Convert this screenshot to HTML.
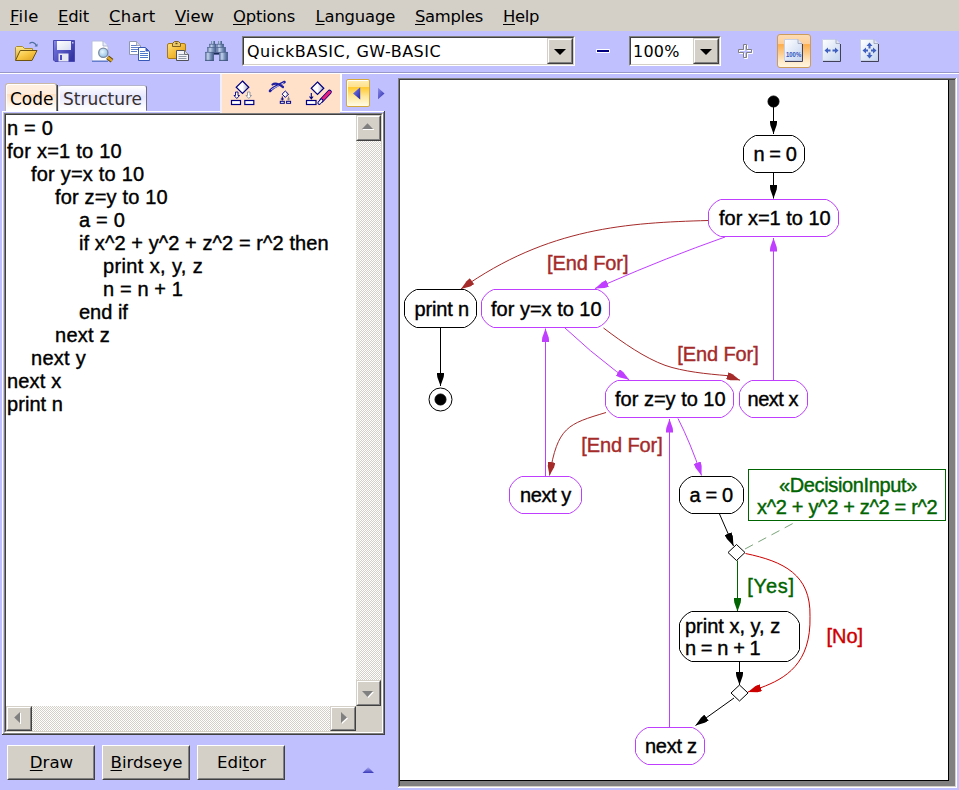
<!DOCTYPE html>
<html>
<head>
<meta charset="utf-8">
<title>Code to FlowChart</title>
<style>
html,body{margin:0;padding:0;}
body{width:959px;height:790px;overflow:hidden;position:relative;background:#c0c0ff;font-family:"DejaVu Sans","Liberation Sans",sans-serif;font-size:16px;color:#000;}
.abs{position:absolute;}
#menubar{position:absolute;left:0;top:0;width:959px;height:31px;background:#d4d0c8;}
#menubar span{position:absolute;top:7px;line-height:19px;font-size:16.4px;white-space:pre;}
u{text-decoration:underline;text-underline-offset:2px;text-decoration-thickness:1px;}
.sunken{position:absolute;box-sizing:border-box;border:1px solid;border-color:#808080 #fff #fff #808080;background:#fff;}
.sunken>.in{position:absolute;left:0;top:0;right:0;bottom:0;box-sizing:border-box;border:1px solid;border-color:#404040 #d4d0c8 #d4d0c8 #404040;}
.btn{position:absolute;box-sizing:border-box;background:#d4d0c8;border:1px solid;border-color:#fff #404040 #404040 #fff;}
.btn>.in{position:absolute;left:0;top:0;right:0;bottom:0;box-sizing:border-box;border:1px solid;border-color:#d4d0c8 #808080 #808080 #d4d0c8;}
.btn.sb{border-color:#d4d0c8 #404040 #404040 #d4d0c8;}
.btn.sb>.in{border-color:#fff #808080 #808080 #fff;}
.check{background:conic-gradient(#fff 25%,#d4d0c8 0 50%,#fff 0 75%,#d4d0c8 0) 0 0/2px 2px;}
.code{-webkit-text-stroke:0.4px #000;position:absolute;font-family:"Liberation Sans",sans-serif;font-size:20px;line-height:23px;white-space:pre;color:#000;}
.pushtxt{position:absolute;left:1px;right:0;top:7px;text-align:center;font-size:16.6px;line-height:19px;}
svg text{font-family:"Liberation Sans",sans-serif;font-size:20px;stroke-width:0.4px;}
</style>
</head>
<body>

<!-- ===== menu bar ===== -->
<div id="menubar">
<span style="left:10px;letter-spacing:0.3px"><u>F</u>ile</span>
<span style="left:58px;letter-spacing:-0.2px"><u>E</u>dit</span>
<span style="left:109px;letter-spacing:0.28px"><u>C</u>hart</span>
<span style="left:175px"><u>V</u>iew</span>
<span style="left:233px;letter-spacing:-0.18px"><u>O</u>ptions</span>
<span style="left:315.5px;letter-spacing:-0.15px"><u>L</u>anguage</span>
<span style="left:415px;letter-spacing:-0.3px"><u>S</u>amples</span>
<span style="left:503px;letter-spacing:-0.3px"><u>H</u>elp</span>
</div>

<!-- ===== toolbar ===== -->
<div class="abs" style="left:0;top:72px;width:959px;height:1px;background:#9898c8"></div>
<div class="abs" style="left:0;top:73px;width:959px;height:1px;background:#fff"></div>

<!-- language combobox -->
<div class="sunken" style="left:242px;top:36px;width:333px;height:30px"><div class="in"></div>
<div class="abs" style="left:4px;top:5px;font-size:16px;line-height:19px;white-space:pre;letter-spacing:0.5px">QuickBASIC, GW-BASIC</div>
<div class="btn sb" style="left:304px;top:1px;width:26px;height:26px"><div class="in"></div>
<svg class="abs" style="left:6px;top:10px" width="12" height="6"><path d="M0 0H12L6 6Z" fill="#000"/></svg></div>
</div>

<!-- zoom combobox -->
<div class="sunken" style="left:629px;top:36px;width:92px;height:30px"><div class="in"></div>
<div class="abs" style="left:3px;top:5px;font-size:16px;line-height:19px;white-space:pre;letter-spacing:0.2px">100%</div>
<div class="btn sb" style="left:63px;top:1px;width:26px;height:26px"><div class="in"></div>
<svg class="abs" style="left:6px;top:10px" width="12" height="6"><path d="M0 0H12L6 6Z" fill="#000"/></svg></div>
</div>

<!-- minus / plus -->
<div class="abs" style="left:596px;top:49px;width:14px;height:4px;background:#fff;border-radius:1px"></div><div class="abs" style="left:597px;top:50px;width:12px;height:2px;background:#000080"></div>
<svg class="abs" style="left:730px;top:38px" width="32" height="26" viewBox="730 38 32 26"><path id="plus" d="M743.5 44.5H746.5V49.5H751.5V52.5H746.5V57.5H743.5V52.5H738.5V49.5H743.5Z" fill="none" stroke="#fff" stroke-width="1" transform="translate(1,1)"/><path d="M743.5 44.5H746.5V49.5H751.5V52.5H746.5V57.5H743.5V52.5H738.5V49.5H743.5Z" fill="none" stroke="#808080" stroke-width="1"/></svg>

<!-- toolbar icons -->
<svg class="abs" style="left:0;top:31px" width="240" height="41" viewBox="0 31 240 41">
<defs>
<linearGradient id="gFold" x1="0" y1="0" x2="0" y2="1"><stop offset="0" stop-color="#ffe98c"/><stop offset="1" stop-color="#d9a22c"/></linearGradient>
<linearGradient id="gFold2" x1="0" y1="0" x2="1" y2="1"><stop offset="0" stop-color="#ffe88a"/><stop offset="0.5" stop-color="#f6c440"/><stop offset="1" stop-color="#d89c20"/></linearGradient>
<linearGradient id="gFlop" x1="0" y1="0" x2="1" y2="0.6"><stop offset="0" stop-color="#9090e8"/><stop offset="0.25" stop-color="#6a6ad4"/><stop offset="1" stop-color="#3434a4"/></linearGradient>
<linearGradient id="gWh" x1="0" y1="0" x2="1" y2="1"><stop offset="0" stop-color="#ffffff"/><stop offset="1" stop-color="#d8dcf0"/></linearGradient>
<linearGradient id="gClip" x1="0" y1="0" x2="1" y2="1"><stop offset="0" stop-color="#ffe27a"/><stop offset="0.5" stop-color="#f4bc38"/><stop offset="1" stop-color="#d4981c"/></linearGradient>
<linearGradient id="gBin" x1="0" y1="0" x2="1" y2="0"><stop offset="0" stop-color="#4c6490"/><stop offset="0.3" stop-color="#c4d4ee"/><stop offset="0.6" stop-color="#7e96be"/><stop offset="1" stop-color="#3c5480"/></linearGradient>
<radialGradient id="gLens" cx="0.4" cy="0.4" r="0.7"><stop offset="0" stop-color="#e8f6ff"/><stop offset="1" stop-color="#88bce0"/></radialGradient>
</defs>
<!-- open folder -->
<path d="M15.5 60V47.5L16.5 46.5H22.5L24.5 48.5H32.5V50.5" fill="url(#gFold)" stroke="#a88830" stroke-width="1"/>
<path d="M15.5 60.5L20.2 50.5H37L32 60.5Z" fill="url(#gFold2)" stroke="#6e5210" stroke-width="1"/>
<path d="M29.5 43.5C32 41.5 35 42.5 36.5 46" fill="none" stroke="#5070a0" stroke-width="1.2"/>
<path d="M34.5 46.5H37.5V43.5Z" fill="#5070a0"/>
<!-- floppy -->
<path d="M53.5 40.5H74.5V61.5H55L53.5 60Z" fill="url(#gFlop)" stroke="#4848b4" stroke-width="1"/>
<rect x="57" y="41" width="14" height="9" fill="url(#gWh)"/>
<rect x="58.5" y="53.5" width="10" height="8" fill="#e4e6f4"/>
<rect x="60" y="55" width="2" height="5" fill="#4848c0"/>
<rect x="72" y="42" width="1.5" height="1.5" fill="#c0c0f0"/>
<!-- print preview -->
<path d="M92 41H103L108 46V61H92Z" fill="#fff" stroke="#b8c0e0" stroke-width="1"/>
<path d="M103 41V46H108" fill="#e8ecfa" stroke="#a0a8c8" stroke-width="0.8"/>
<path d="M92 61.2H108" stroke="#4060c0" stroke-width="1"/>
<path d="M107.5 57.2L112 60.8" stroke="#5a4410" stroke-width="4.4" stroke-linecap="butt"/>
<path d="M107.5 57.2L112 60.8" stroke="#d8a428" stroke-width="2.6" stroke-linecap="butt"/>
<circle cx="103.3" cy="52.8" r="4.6" fill="url(#gLens)" stroke="#7888a0" stroke-width="1.3"/>
<!-- copy -->
<path d="M129.5 41.5H136.5L140.5 45.5V54.5H129.5Z" fill="#fff" stroke="#9098b0" stroke-width="1"/>
<path d="M131 45.5H137M131 47.5H139M131 49.5H139M131 51.5H137" stroke="#6080c8" stroke-width="1"/>
<path d="M136.5 41.5V45.5H140.5" fill="#d0d4e0" stroke="#9098b0" stroke-width="0.8"/>
<path d="M138.5 47.5H145.5L149.5 51.5V60.5H138.5Z" fill="#fff" stroke="#3858b8" stroke-width="1"/>
<path d="M140 51.5H145M140 53.5H148M140 55.5H148M140 57.5H148" stroke="#5078c8" stroke-width="1"/>
<path d="M145.5 47.5V51.5H149.5Z" fill="#3858b8"/>
<!-- paste -->
<rect x="167.5" y="43.5" width="18" height="15" rx="1.5" fill="url(#gClip)" stroke="#a87818" stroke-width="1"/>
<path d="M172.5 46.5V43.5L174.5 41.5H178.5L180.5 43.5V46.5Z" fill="#e8c868" stroke="#806020" stroke-width="1"/>
<rect x="175.5" y="42.8" width="2" height="1.4" fill="#604810"/>
<path d="M176.5 50.5H184.5L188.5 54.5V60.5H176.5Z" fill="#f4f4f8" stroke="#505058" stroke-width="1"/>
<path d="M178.5 54.5H184M178.5 56.5H186.5M178.5 58.5H186.5" stroke="#9098a8" stroke-width="1"/>
<path d="M184.5 50.5V54.5H188.5" fill="#d8d8e0" stroke="#505058" stroke-width="0.8"/>
<!-- binoculars -->
<g>
<rect x="211" y="41" width="4" height="3.2" fill="url(#gBin)"/>
<rect x="218" y="41" width="4" height="3.2" fill="url(#gBin)"/>
<rect x="209.2" y="44" width="7" height="3.4" fill="url(#gBin)"/>
<rect x="216.6" y="44" width="7.2" height="3.4" fill="url(#gBin)"/>
<rect x="207.2" y="47.2" width="9.2" height="5" fill="url(#gBin)"/>
<rect x="216.6" y="47.2" width="9.2" height="5" fill="url(#gBin)"/>
<rect x="213.5" y="52.4" width="6" height="2.2" fill="#1c2c58"/>
<rect x="205.2" y="52" width="8.7" height="8.8" fill="url(#gBin)"/>
<rect x="219.2" y="52" width="8.7" height="8.8" fill="url(#gBin)"/>
<path d="M205.2 52.4H213.9M219.2 52.4H227.9M207.2 47.5H216.4M216.6 47.5H225.8M209.2 44.3H216.2M216.6 44.3H223.8" stroke="#4a6088" stroke-width="0.7" fill="none"/>
<path d="M205.2 60.4H213.9M219.2 60.4H227.9" stroke="#3a5078" stroke-width="0.9" fill="none"/>
</g>
</svg>

<!-- right toolbar buttons -->
<div class="abs" style="left:777px;top:34px;width:34px;height:34px;box-sizing:border-box;border:1px solid #cc9c5c;border-radius:3px;background:linear-gradient(#fddcb4 0%,#fdcf9a 27%,#fdae4c 30%,#fdc47c 50%,#ffe8c4 80%,#fff6e0 100%)"></div>
<svg class="abs" style="left:770px;top:31px" width="120" height="41" viewBox="770 31 120 41">
<defs>
<linearGradient id="gPg" x1="0" y1="0" x2="1" y2="1"><stop offset="0" stop-color="#ffffff"/><stop offset="1" stop-color="#c4d4f0"/></linearGradient>
</defs>
<g stroke-width="1">
<path d="M784.5 39.5H798L802 43.5V60.5H784.5Z" fill="url(#gPg)" stroke="#c8d0e8"/>
<path d="M802.5 44V61.5H785" fill="none" stroke="#404058"/>
<path d="M798 39.5V43.5H802" fill="#e0e4f0" stroke="#9098b0" stroke-width="0.7"/>
<path d="M822.5 39.5H836L840 43.5V60.5H822.5Z" fill="url(#gPg)" stroke="#c8d0e8"/>
<path d="M840.5 44V61.5H823" fill="none" stroke="#404058"/>
<path d="M836 39.5V43.5H840" fill="#e0e4f0" stroke="#9098b0" stroke-width="0.7"/>
<path d="M860.5 39.5H874L878 43.5V60.5H860.5Z" fill="url(#gPg)" stroke="#c8d0e8"/>
<path d="M878.5 44V61.5H861" fill="none" stroke="#404058"/>
<path d="M874 39.5V43.5H878" fill="#e0e4f0" stroke="#9098b0" stroke-width="0.7"/>
</g>
<text x="786" y="56.8" style="font-family:'Liberation Sans',sans-serif;font-size:6.8px;font-weight:bold;stroke:none" fill="#3454bc" textLength="15.2" lengthAdjust="spacingAndGlyphs">100%</text>
<g fill="#4060c0">
<path d="M824.5 50.5L828 47.5V49.5H830.5V51.5H828V53.5Z"/>
<path d="M838.5 50.5L835 47.5V49.5H832.5V51.5H835V53.5Z"/>
<path d="M862.5 50.5L866 47.5V49.5H868V51.5H866V53.5Z"/>
<path d="M876.5 50.5L873 47.5V49.5H871V51.5H873V53.5Z"/>
<path d="M869.5 42.5L872.5 46H870.5V48.5H868.5V46H866.5Z"/>
<path d="M869.5 58.5L872.5 55H870.5V52.5H868.5V55H866.5Z"/>
</g>
</svg>


<!-- ===== left panel ===== -->
<div id="leftpanel">
<!-- peach icon strip -->

<!-- gold arrow button -->
<div class="abs" style="left:346px;top:79px;width:24px;height:28px;box-sizing:border-box;border:1px solid #d4a83c;border-radius:2px;background:linear-gradient(#ffeeb4 0%,#ffe08c 27%,#ffc930 29%,#ffe698 62%,#fffbe8 100%);box-shadow:inset 1px 1px 0 #fff"></div>
<svg class="abs" style="left:352px;top:87px" width="10" height="13"><defs><linearGradient id="gArr" x1="0" y1="0" x2="1" y2="1"><stop offset="0" stop-color="#8888e8"/><stop offset="1" stop-color="#2020a8"/></linearGradient></defs><path d="M8.2 0.2V12.6L1 6.4Z" fill="url(#gArr)"/></svg>
<svg class="abs" style="left:377px;top:87px" width="9" height="13"><defs><linearGradient id="gArr2" x1="0" y1="0" x2="1" y2="1"><stop offset="0" stop-color="#9090e8"/><stop offset="1" stop-color="#2828b0"/></linearGradient></defs><path d="M1 0.8V12.2L7.5 6.5Z" fill="url(#gArr2)"/></svg>

<!-- tabs -->
<div class="abs" style="left:58px;top:85px;width:89px;height:26px;box-sizing:border-box;border:1px solid;border-color:#b4b4cc #6c6c7c transparent #e8e8f8;border-radius:3px 3px 0 0;background:linear-gradient(#fff,#e6e6ff 45%,#fff 95%);box-shadow:inset 1px 1px 0 #fff"></div>
<div class="abs" style="left:63px;top:89px;font-size:17px;line-height:20px;white-space:pre;color:#383030">Structure</div>
<div class="abs" style="left:5px;top:83px;width:52px;height:29px;box-sizing:border-box;border:1px solid;border-color:#cbb8a4 #808080 transparent #cbb8a4;border-radius:3px 3px 0 0;background:linear-gradient(#fff0e2,#ffeedd 36%,#ffdfc0 37%,#fff 95%);box-shadow:inset 1px 1px 0 #fff"></div>
<div class="abs" style="left:57px;top:85px;width:1px;height:26px;background:#404040"></div>
<div class="abs" style="left:10px;top:89px;font-size:17px;line-height:20px;white-space:pre">Code</div>

<!-- tab page frame -->
<div class="abs" style="left:2px;top:111px;width:383px;height:1px;background:#fff"></div>
<div class="abs" style="left:2px;top:111px;width:1px;height:624px;background:#fff"></div>
<div class="abs" style="left:384px;top:111px;width:1px;height:624px;background:#404040"></div>
<div class="abs" style="left:383px;top:112px;width:1px;height:622px;background:#808080"></div>
<div class="abs" style="left:2px;top:734px;width:383px;height:1px;background:#404040"></div>
<div class="abs" style="left:3px;top:733px;width:381px;height:1px;background:#808080"></div>

<div class="abs" style="left:222px;top:74px;width:118px;height:39px;background:#ffe0c8"></div>
<div class="abs" style="left:340px;top:74px;width:2px;height:38px;background:#fff"></div>
<div class="abs" style="left:220px;top:74px;width:2px;height:39px;background:#eeeeff"></div>
<!-- peach strip icons -->
<svg class="abs" style="left:222px;top:74px" width="118" height="38" viewBox="222 74 118 38">
<defs>
<linearGradient id="gDia" x1="0" y1="0" x2="1" y2="0"><stop offset="0" stop-color="#ffffff"/><stop offset="0.5" stop-color="#ffffff"/><stop offset="1" stop-color="#a8a8b8"/></linearGradient>
</defs>
<g stroke="#000080" stroke-width="1.2" fill="#fff">
<path d="M242.5 81L248.8 87.3L242.5 93.5L236.2 87.3Z" fill="url(#gDia)"/>
<rect x="231.5" y="100.5" width="9" height="4"/>
<rect x="244.8" y="100.5" width="9" height="4"/>
<path d="M235.5 92V95.5H234L236.8 98.5L239.5 95.5H238V92Z" stroke-width="0.9"/>
<path d="M247.5 92V95.5H246L248.8 98.5L251.5 95.5H250V92Z" stroke="#909098" stroke-width="0.9"/>
<!-- icon 2 -->
<path d="M285.3 91L288.5 94.2L285.3 97.4L282.1 94.2Z" fill="url(#gDia)" stroke-width="1"/>
<rect x="280.3" y="101.3" width="4" height="2" stroke-width="1"/>
<rect x="286.6" y="101.3" width="4" height="2" stroke-width="1"/>
<path d="M282.3 96.5V100.5M280.8 99H283.8" stroke-width="1" fill="none"/>
<path d="M288.6 96.5V100.5M287.1 99H290.1" stroke="#808090" stroke-width="1" fill="none"/>
<!-- icon 3 -->
<path d="M317.5 82L323.8 88.3L317.5 94.5L311.2 88.3Z" fill="url(#gDia)"/>
<rect x="306.5" y="100.5" width="9.5" height="4"/>
<path d="M311.3 93V98M309.5 96.5L311.3 98.8L313.1 96.5" fill="none" stroke-width="1.1"/>
</g>
<!-- brush of icon 2 -->
<path d="M270 91C272 87.5 277 85.5 284.5 82" stroke="#2020a0" stroke-width="2.6" stroke-linecap="round" fill="none"/>
<path d="M271.5 89.5C274 87.5 278 86 283.5 83" stroke="#c8c8f0" stroke-width="1" stroke-linecap="round" fill="none"/>
<path d="M272.5 84.5C275 82.5 279 84 283 87" stroke="#2020a0" stroke-width="2.2" stroke-linecap="round" fill="none"/>
<!-- marker of icon 3 -->
<path d="M329.5 92L321.5 100.5" stroke="#000080" stroke-width="4.6" stroke-linecap="round"/>
<path d="M329.5 92L322.5 99.5" stroke="#e8207c" stroke-width="3" stroke-linecap="round"/>
<path d="M321.6 100.4L319.2 103" stroke="#000080" stroke-width="3.6" stroke-linecap="round"/>
<path d="M321.4 100.6L319.4 102.8" stroke="#ffffff" stroke-width="2" stroke-linecap="round"/>
</svg>
<!-- text control -->
<div class="sunken" style="left:4px;top:113px;width:379px;height:620px"><div class="in"></div></div>
<div class="code" style="left:7px;top:117px;letter-spacing:0.188px">n = 0</div>
<div class="code" style="left:7px;top:140px;letter-spacing:0.250px">for x=1 to 10</div>
<div class="code" style="left:31px;top:163px;letter-spacing:0.208px">for y=x to 10</div>
<div class="code" style="left:55px;top:186px;letter-spacing:0.167px">for z=y to 10</div>
<div class="code" style="left:79px;top:209px;letter-spacing:0.188px">a = 0</div>
<div class="code" style="left:79px;top:232px;letter-spacing:0.089px">if x^2 + y^2 + z^2 = r^2 then</div>
<div class="code" style="left:103px;top:255px;letter-spacing:0.375px">print x, y, z</div>
<div class="code" style="left:103px;top:278px;letter-spacing:0.125px">n = n + 1</div>
<div class="code" style="left:79px;top:301px">end if</div>
<div class="code" style="left:55px;top:324px;letter-spacing:0.260px">next z</div>
<div class="code" style="left:31px;top:347px;letter-spacing:0.260px">next y</div>
<div class="code" style="left:7px;top:370px;letter-spacing:0.160px">next x</div>
<div class="code" style="left:7px;top:393px;letter-spacing:0.050px">print n</div>

<!-- vertical scrollbar -->
<div class="abs check" style="left:356px;top:115px;width:25px;height:591px"></div>
<div class="btn sb" style="left:356px;top:115px;width:25px;height:26px"><div class="in"></div>
<svg class="abs" style="left:5px;top:7px" width="14" height="9"><path d="M1 6.5H12" stroke="#fff"/><path d="M0 6H11L5.5 0.2Z" fill="#808080"/></svg></div>
<div class="btn sb" style="left:356px;top:680px;width:25px;height:26px"><div class="in"></div>
<svg class="abs" style="left:5px;top:10px" width="14" height="9"><path d="M1 1H12L6.5 7Z" fill="#fff"/><path d="M0 0H11L5.5 6Z" fill="#808080"/></svg></div>
<!-- horizontal scrollbar -->
<div class="abs check" style="left:6px;top:706px;width:350px;height:25px"></div>
<div class="btn sb" style="left:6px;top:706px;width:26px;height:25px"><div class="in"></div>
<svg class="abs" style="left:7px;top:5px" width="9" height="14"><path d="M6.5 1V12" stroke="#fff"/><path d="M6 0V11L0.2 5.5Z" fill="#808080"/></svg></div>
<div class="btn sb" style="left:330px;top:706px;width:26px;height:25px"><div class="in"></div>
<svg class="abs" style="left:10px;top:5px" width="9" height="14"><path d="M1 1V12L7 6.5Z" fill="#fff"/><path d="M0 0V11L6 5.5Z" fill="#808080"/></svg></div>
<div class="abs" style="left:356px;top:706px;width:25px;height:25px;background:#d4d0c8"></div>

<!-- bottom buttons -->
<div class="btn" style="left:7px;top:745px;width:88px;height:35px"><div class="in"></div><div class="pushtxt"><u>D</u>raw</div></div>
<div class="btn" style="left:102px;top:745px;width:88px;height:35px"><div class="in"></div><div class="pushtxt"><u>B</u>irdseye</div></div>
<div class="btn" style="left:197px;top:745px;width:88px;height:35px"><div class="in"></div><div class="pushtxt">Edi<u>t</u>or</div></div>
<svg class="abs" style="left:362px;top:766px" width="13" height="8"><defs><linearGradient id="gTri" x1="0" y1="0" x2="0" y2="1"><stop offset="0" stop-color="#b0b0f8"/><stop offset="1" stop-color="#3838b8"/></linearGradient></defs><path d="M0.5 7H12L6.2 1Z" fill="url(#gTri)"/></svg>
</div>

<!-- ===== diagram panel ===== -->
<div id="diagram">
<!-- frame -->
<div class="abs" style="left:398px;top:78px;width:559px;height:710px;background:#808080"></div>
<div class="abs" style="left:399px;top:79px;width:557px;height:708px;background:#404040"></div>
<div class="abs" style="left:400px;top:80px;width:557px;height:708px;background:#fff"></div>
<div class="abs" style="left:400px;top:80px;width:556px;height:707px;background:#d4d0c8"></div>
<div class="abs" style="left:400px;top:80px;width:555px;height:706px;background:#808080"></div>
<div class="abs" style="left:400px;top:80px;width:549px;height:701px;background:#000"></div>
<div class="abs" style="left:399px;top:786px;width:557px;height:1px;background:#d4d0c8"></div>
<div class="abs" style="left:398px;top:787px;width:559px;height:1px;background:#fff"></div>
<div class="abs" style="left:956px;top:78px;width:1px;height:710px;background:#fff"></div>
<div class="abs" style="left:955px;top:79px;width:1px;height:708px;background:#d4d0c8"></div>
<svg class="abs" style="left:400px;top:80px;background:#fff" width="548" height="700" viewBox="400 80 548 700">
<defs>
<marker id="mk" viewBox="0 0 13.5 7.4" refX="13.5" refY="3.7" markerWidth="13.5" markerHeight="7.4" markerUnits="userSpaceOnUse" orient="auto"><path d="M0 0L4.5 0.5L13.5 3.7L4.5 6.9L0 7.4Z" fill="#000"/></marker>
<marker id="mp" viewBox="0 0 13.5 7.4" refX="13.5" refY="3.7" markerWidth="13.5" markerHeight="7.4" markerUnits="userSpaceOnUse" orient="auto"><path d="M0 0L4.5 0.5L13.5 3.7L4.5 6.9L0 7.4Z" fill="#bf3eff"/></marker>
<marker id="mb" viewBox="0 0 13.5 7.4" refX="13.5" refY="3.7" markerWidth="13.5" markerHeight="7.4" markerUnits="userSpaceOnUse" orient="auto"><path d="M0 0L4.5 0.5L13.5 3.7L4.5 6.9L0 7.4Z" fill="#a52a2a"/></marker>
<marker id="mg" viewBox="0 0 13.5 7.4" refX="13.5" refY="3.7" markerWidth="13.5" markerHeight="7.4" markerUnits="userSpaceOnUse" orient="auto"><path d="M0 0L4.5 0.5L13.5 3.7L4.5 6.9L0 7.4Z" fill="#006400"/></marker>
<marker id="mr" viewBox="0 0 13.5 7.4" refX="13.5" refY="3.7" markerWidth="13.5" markerHeight="7.4" markerUnits="userSpaceOnUse" orient="auto"><path d="M0 0L4.5 0.5L13.5 3.7L4.5 6.9L0 7.4Z" fill="#cd0000"/></marker>
</defs>
<g fill="none" stroke-width="1">
<!-- edges -->
<g stroke="#000">
<path d="M773.5 107V134" marker-end="url(#mk)"/>
<path d="M773.5 173V198.5" marker-end="url(#mk)"/>
<path d="M440.5 328V386" marker-end="url(#mk)"/>
<path d="M719.5 514L733.5 546" marker-end="url(#mk)"/>
<path d="M739.5 662V685" marker-end="url(#mk)"/>
<path d="M734 698L695.5 725.5" marker-end="url(#mk)"/>
</g>
<g stroke="#bf3eff">
<path d="M725 237Q665 258.3 610 282.4L595 288.5" marker-end="url(#mp)"/>
<path d="M773.5 380V238" marker-end="url(#mp)"/>
<path d="M545.5 476V328.5" marker-end="url(#mp)"/>
<path d="M565 328Q590 351.5 616.7 371.7L629.2 379.8" marker-end="url(#mp)"/>
<path d="M669.5 727V419" marker-end="url(#mp)"/>
<path d="M678 418.5Q690.5 443 701.5 475.5" marker-end="url(#mp)"/>
</g>
<g stroke="#a52a2a">
<path d="M708 220.5C628.6 222.8 548.1 227.1 461 289" marker-end="url(#mb)"/>
<path d="M603.5 328C623.5 343.2 645 358 665 365.3C683 371.6 707 374 727 375.6L740 380.2" marker-end="url(#mb)"/>
<path d="M606 412.5C568 424 557.5 426.5 549.5 475.5" marker-end="url(#mb)"/>
</g>
<path d="M737.5 560.5V611.5" stroke="#006400" marker-end="url(#mg)"/>
<path d="M745.5 553.5C783.9 561.5 810.9 574.6 810 616.3C811.2 664 785.3 678.6 760.8 687.7L748 692" stroke="#cd0000" marker-end="url(#mr)"/>
<path d="M745 549L797.5 521" stroke="#6a986a" stroke-width="0.9" stroke-dasharray="9 6"/>
<!-- nodes -->
<g stroke="#000" fill="#fff">
<circle cx="773.5" cy="101.5" r="5.5" fill="#000"/>
<path d="M755.5 135.5H792.5Q801.1 138.9 804.5 147.5V160.5Q801.1 169.1 792.5 172.5H755.5Q746.9 169.1 743.5 160.5V147.5Q746.9 138.9 755.5 135.5Z"/>
<path d="M416.5 289.5H464.5Q473.1 292.9 476.5 301.5V315.5Q473.1 324.1 464.5 327.5H416.5Q407.9 324.1 404.5 315.5V301.5Q407.9 292.9 416.5 289.5Z"/>
<circle cx="440.5" cy="399.5" r="11.5"/>
<circle cx="440.5" cy="399.5" r="5.5" fill="#000"/>
<path d="M691.5 476.5H731.5Q740.1 479.9 743.5 488.5V501.5Q740.1 510.1 731.5 513.5H691.5Q682.9 510.1 679.5 501.5V488.5Q682.9 479.9 691.5 476.5Z"/>
<path d="M736.5 544.5L745 552.5L736.5 560.5L728 552.5Z"/>
<path d="M691.5 611.5H787.5Q796.1 614.9 799.5 623.5V649.5Q796.1 658.1 787.5 661.5H691.5Q682.9 658.1 679.5 649.5V623.5Q682.9 614.9 691.5 611.5Z"/>
<path d="M739.5 685L748 693L739.5 701L731 693Z"/>
</g>
<g stroke="#bf3eff" fill="#fff">
<path d="M720.5 199.5H826.5Q835.1 202.9 838.5 211.5V224.5Q835.1 233.1 826.5 236.5H720.5Q711.9 233.1 708.5 224.5V211.5Q711.9 202.9 720.5 199.5Z"/>
<path d="M493.5 289.5H597.5Q606.1 292.9 609.5 301.5V315.5Q606.1 324.1 597.5 327.5H493.5Q484.9 324.1 481.5 315.5V301.5Q484.9 292.9 493.5 289.5Z"/>
<path d="M617.5 380.5H721.5Q730.1 383.9 733.5 392.5V405.5Q730.1 414.1 721.5 417.5H617.5Q608.9 414.1 605.5 405.5V392.5Q608.9 383.9 617.5 380.5Z"/>
<path d="M751.5 380.5H795.5Q804.1 383.9 807.5 392.5V405.5Q804.1 414.1 795.5 417.5H751.5Q742.9 414.1 739.5 405.5V392.5Q742.9 383.9 751.5 380.5Z"/>
<path d="M521.5 476.5H569.5Q578.1 479.9 581.5 488.5V501.5Q578.1 510.1 569.5 513.5H521.5Q512.9 510.1 509.5 501.5V488.5Q512.9 479.9 521.5 476.5Z"/>
<path d="M647.5 727.5H692.5Q701.1 730.9 704.5 739.5V752.5Q701.1 761.1 692.5 764.5H647.5Q638.9 761.1 635.5 752.5V739.5Q638.9 730.9 647.5 727.5Z"/>
</g>
<rect x="748.5" y="469.5" width="197" height="51" stroke="#006400" fill="#fff"/>
</g>
<!-- labels -->
<g fill="#000" stroke="#000">
<text x="753.4" y="161" textLength="43.4">n = 0</text>
<text x="719" y="225">for x=1 to 10</text>
<text x="414.5" y="315.5" textLength="54.5">print n</text>
<text x="491" y="315.5">for y=x to 10</text>
<text x="615" y="405.5">for z=y to 10</text>
<text x="747.5" y="405.5" textLength="50.9">next x</text>
<text x="520" y="502" textLength="51.3">next y</text>
<text x="689.6" y="501.5" textLength="43.6">a = 0</text>
<text x="685" y="632.9">print x, y, z</text>
<text x="685" y="655.1" textLength="75.7">n = n + 1</text>
<text x="645" y="752.5" textLength="52.1">next z</text>
</g>
<g fill="#a52a2a" stroke="#a52a2a">
<text x="547" y="270.3" textLength="81.5">[End For]</text>
<text x="677.2" y="360.8" textLength="81.5">[End For]</text>
<text x="581.2" y="452.3" textLength="81.5">[End For]</text>
</g>
<g fill="#006400" stroke="#006400">
<text x="779" y="492.3" textLength="138.3">«DecisionInput»</text>
<text x="757" y="514.3" textLength="180.7">x^2 + y^2 + z^2 = r^2</text>
<text x="747.3" y="592.5" textLength="46.8">[Yes]</text>
</g>
<text x="826.5" y="643.4" fill="#cd0000" stroke="#cd0000">[No]</text>
</svg>
</div>

</body>
</html>
